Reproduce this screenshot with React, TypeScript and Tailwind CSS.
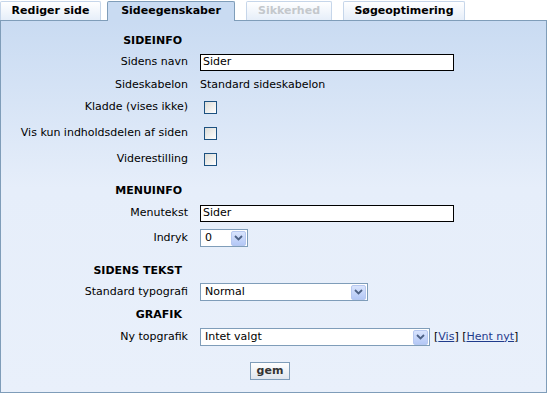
import React from "react";

const font = { fontFamily: '"DejaVu Sans", Verdana, sans-serif' };

function Chevron() {
  return (
    <span className="flex h-[15px] w-[15px] items-center justify-center rounded-[2px] border border-[#b7c8f0] bg-gradient-to-b from-[#d9e4fd] to-[#b4c8f6]">
      <svg width="9" height="6" viewBox="0 0 9 6">
        <path d="M1 1 L4.5 4.5 L8 1" fill="none" stroke="#4d6185" strokeWidth="1.8" />
      </svg>
    </span>
  );
}

function Select({ value, width }: { value: string; width: string }) {
  return (
    <div className={`flex h-[18px] ${width} items-center justify-between border border-[#7f9db9] bg-white pl-[4px] pr-[1px] text-[11px] text-black`}>
      <span>{value}</span>
      <Chevron />
    </div>
  );
}

function Checkbox() {
  return (
    <span className="ml-[4px] block h-[13px] w-[13px] border border-[#1c5180] bg-gradient-to-br from-[#dcdcd7] to-white" />
  );
}

function Row({ label, children, mt }: { label: string; children?: React.ReactNode; mt: string }) {
  return (
    <div className={`flex h-[18px] items-center ${mt}`}>
      <div className="w-[188px] shrink-0 pr-[1px] text-right text-[11px] text-black">{label}</div>
      <div className="ml-[11px] flex items-center">{children}</div>
    </div>
  );
}

function Header({ title, mt }: { title: string; mt: string }) {
  return (
    <div className={`flex h-[18px] items-center ${mt}`}>
      <div className="w-[181px] text-right text-[11px] font-bold text-black">{title}</div>
    </div>
  );
}

const tabs = [
  { label: "Rediger side", w: "w-[101px]", state: "idle", ml: "ml-0" },
  { label: "Sideegenskaber", w: "w-[128px]", state: "active", ml: "ml-[6px]" },
  { label: "Sikkerhed", w: "w-[86px]", state: "disabled", ml: "ml-[11px]" },
  { label: "Søgeoptimering", w: "w-[122px]", state: "idle", ml: "ml-[11px]" },
];

export default function App() {
  return (
    <div className="h-[393px] w-[548px] bg-white" style={font}>
      <div className="flex h-[20px] items-end">
        {tabs.map((t, i) => (
          <div
            key={i}
            className={
              t.state === "active"
                ? `relative z-10 -mb-px flex h-[20px] ${t.w} ${t.ml} items-center justify-center rounded-t-[2px] border border-b-0 border-[#7f9db9] bg-[#c9dbf2] text-[11px] font-bold text-black`
                : `flex h-[19px] ${t.w} ${t.ml} items-center justify-center rounded-t-[2px] border border-b-0 border-[#c6d6ea] bg-gradient-to-b from-white to-[#e6eef9] text-[11px] font-bold ${t.state === "disabled" ? "text-[#c4c8cc]" : "text-black"}`
            }
          >
            {t.label}
          </div>
        ))}
      </div>
      <div className="h-[373px] w-[547px] border border-[#7f9db9] bg-gradient-to-b from-[#c9dbf2] via-[#e6eefa] via-45% to-[#e9f0fb] pt-[11px]">
        <Header title="SIDEINFO" mt="mt-0" />
        <Row label="Sidens navn" mt="mt-[3px]">
          <div className="flex h-[17px] w-[254px] items-center border border-black bg-white pl-[2px] text-[11px]">Sider</div>
        </Row>
        <Row label="Sideskabelon" mt="mt-[5px]">
          <span className="text-[11px]">Standard sideskabelon</span>
        </Row>
        <Row label="Kladde (vises ikke)" mt="mt-[4px]">
          <Checkbox />
        </Row>
        <Row label="Vis kun indholdsdelen af siden" mt="mt-[8px]">
          <Checkbox />
        </Row>
        <Row label="Viderestilling" mt="mt-[8px]">
          <Checkbox />
        </Row>
        <Header title="MENUINFO" mt="mt-[14px]" />
        <Row label="Menutekst" mt="mt-[4px]">
          <div className="flex h-[17px] w-[254px] items-center border border-black bg-white pl-[2px] text-[11px]">Sider</div>
        </Row>
        <Row label="Indryk" mt="mt-[7px]">
          <Select value="0" width="w-[48px]" />
        </Row>
        <Header title="SIDENS TEKST" mt="mt-[15px]" />
        <Row label="Standard typografi" mt="mt-[3px]">
          <Select value="Normal" width="w-[168px]" />
        </Row>
        <Header title="GRAFIK" mt="mt-[5px]" />
        <Row label="Ny topgrafik" mt="mt-[4px]">
          <Select value="Intet valgt" width="w-[230px]" />
          <span className="ml-[4px] text-[11px] text-black">
            [<a className="text-[#1f3b8c] underline">Vis</a>] [<a className="text-[#1f3b8c] underline">Hent nyt</a>]
          </span>
        </Row>
        <div className="mt-[16px] flex pl-[249px]">
          <button className="flex h-[18px] w-[40px] items-center justify-center border border-[#7f9db9] bg-gradient-to-b from-white to-[#dfe6ee] text-[11px] font-bold text-[#333]">
            gem
          </button>
        </div>
      </div>
    </div>
  );
}
